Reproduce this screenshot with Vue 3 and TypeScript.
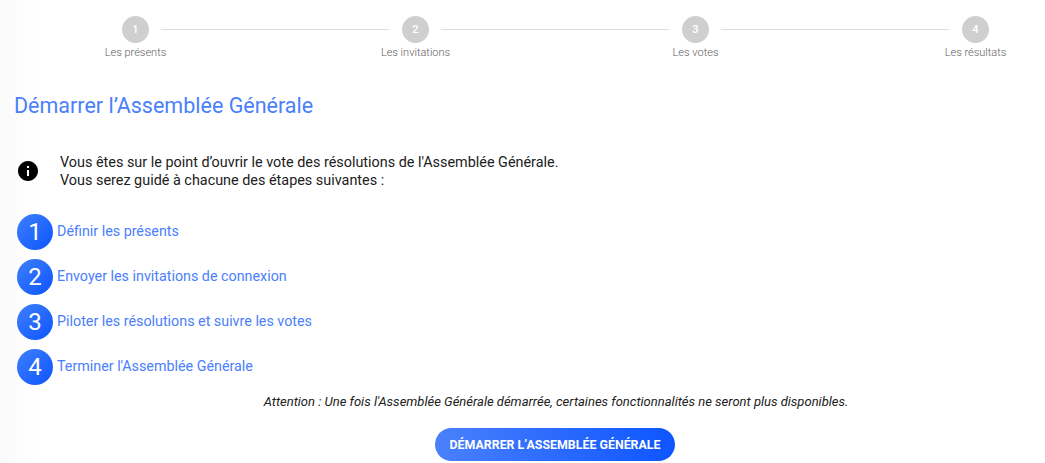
<script setup lang="ts">
const steps: string[] = ['Les présents', 'Les invitations', 'Les votes', 'Les résultats']
const items: string[] = [
  'Définir les présents',
  'Envoyer les invitations de connexion',
  'Piloter les résolutions et suivre les votes',
  "Terminer l'Assemblée Générale",
]
</script>

<template>
  <main class="page">
    <div class="stepper">
      <template v-for="(s, i) in steps" :key="s">
        <div class="step">
          <div class="dot">{{ i + 1 }}</div>
          <div class="step-label">{{ s }}</div>
        </div>
        <div v-if="i < steps.length - 1" class="line"></div>
      </template>
    </div>
    <h1 class="title">Démarrer l’Assemblée Générale</h1>
    <div class="info">
      <svg class="info-icon" viewBox="0 0 24 24" width="24" height="24">
        <path d="M12 2C6.48 2 2 6.48 2 12s4.48 10 10 10 10-4.48 10-10S17.52 2 12 2zm1 15h-2v-6h2v6zm0-8h-2V7h2v2z" fill="#000" />
      </svg>
      <p class="info-text">Vous êtes sur le point d’ouvrir le vote des résolutions de l'Assemblée Générale.<br />Vous serez guidé à chacune des étapes suivantes :</p>
    </div>
    <ul class="list">
      <li v-for="(t, i) in items" :key="t" class="item">
        <span class="num">{{ i + 1 }}</span>
        <span class="item-text">{{ t }}</span>
      </li>
    </ul>
    <p class="warn">Attention : Une fois l'Assemblée Générale démarrée, certaines fonctionnalités ne seront plus disponibles.</p>
    <div class="actions">
      <button class="cta" type="button">DÉMARRER L’ASSEMBLÉE GÉNÉRALE</button>
    </div>
  </main>
</template>

<style>
html, body { margin: 0; background: #fff; overflow: hidden; }
</style>

<style scoped>
.page {
  height: 463px;
  box-sizing: border-box;
  font-family: Roboto, "Liberation Sans", sans-serif;
  background: linear-gradient(90deg, #fafafa 0, #fdfdfd 20px, #fff 38px);
  overflow: hidden;
}
.stepper {
  display: flex;
  align-items: flex-start;
  padding: 16px 0 0 122px;
}
.step {
  width: 27px;
  display: flex;
  flex-direction: column;
  align-items: center;
}
.dot {
  width: 27px;
  height: 27px;
  border-radius: 50%;
  background: #cfcfcf;
  color: #fff;
  font-size: 11px;
  font-weight: 500;
  display: flex;
  align-items: center;
  justify-content: center;
}
.step-label {
  margin-top: 3px;
  font-size: 11px;
  line-height: 14px;
  font-weight: 300;
  color: #616161;
  white-space: nowrap;
}
.line {
  width: 228px;
  height: 1px;
  margin: 13px 13px 0 12px;
  background: #dedede;
}
.title {
  margin: 32px 0 0 14px;
  font-size: 21.5px;
  line-height: 28px;
  font-weight: 400;
  color: #4a80fb;
}
.info {
  display: flex;
  align-items: center;
  margin: 33px 0 0 16px;
}
.info-icon { flex: none; }
.info-text {
  margin: 1px 0 0 20px;
  font-size: 14.4px;
  line-height: 17.5px;
  color: #212121;
}
.list {
  list-style: none;
  margin: 25px 0 0 17px;
  padding: 0;
}
.item {
  display: flex;
  align-items: center;
  height: 36px;
  margin-bottom: 9px;
}
.num {
  flex: none;
  width: 36px;
  height: 36px;
  border-radius: 50%;
  background: linear-gradient(135deg, #3f7ffb, #0d55ff);
  color: #fff;
  font-size: 24px;
  font-weight: 400;
  display: flex;
  align-items: center;
  justify-content: center;
}
.item-text {
  margin: -2px 0 0 4px;
  font-size: 14.3px;
  color: #4a80fb;
}
.warn {
  margin: 2px 0 0;
  padding-left: 67px;
  text-align: center;
  font-size: 13px;
  line-height: 16px;
  font-style: italic;
  color: #212121;
}
.actions {
  display: flex;
  justify-content: center;
  margin-top: 18px;
  padding-left: 65px;
}
.cta {
  width: 240px;
  height: 33px;
  border: 0;
  padding: 0;
  border-radius: 17px;
  background: linear-gradient(90deg, #4a80fb, #0d55ff);
  color: #fff;
  font-family: inherit;
  font-size: 12.4px;
  font-weight: 700;
}
</style>
